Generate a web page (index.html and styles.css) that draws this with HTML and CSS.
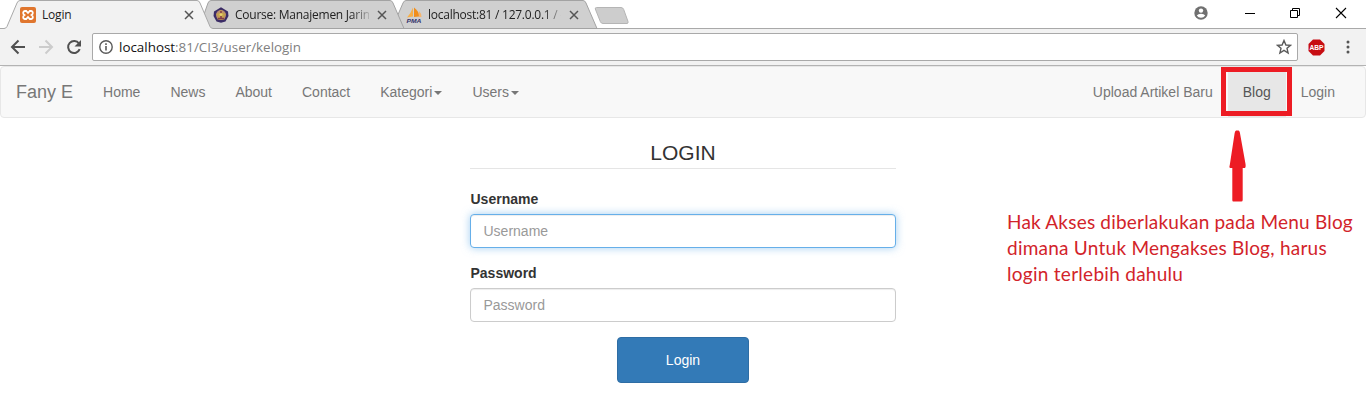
FILE: index.html
```html
<!DOCTYPE html>
<html lang="id">
<head>
<meta charset="utf-8">
<title>Login</title>
<link rel="stylesheet" href="styles.css">
</head>
<body>
<header class="browser">
  <div class="tabstrip">
    <svg class="tab-shapes" width="1366" height="29" viewBox="0 0 1366 29">
      <path d="M0 28.5H1366" stroke="#a9a9a9"/>
      <path d="M392 28.5 403 3Q404 .5 406 .5H583Q585 .5 586 3L597 28.5Z" fill="#d0d0d0" stroke="#a3a3a3"/>
      <path d="M199 28.5 208 3Q209 .5 211 .5H390Q392 .5 393 3L404 28.5Z" fill="#d0d0d0" stroke="#a3a3a3"/>
      <path d="M0 29V28.5H4Q6 28.5 7 26.5L17 3Q18 .5 20 .5H197Q199 .5 200 3L210 26.5Q211 28.5 213 28.5V29Z" fill="#f2f2f2"/>
      <path d="M0 28.5H4Q6 28.5 7 26.5L17 3Q18 .5 20 .5H197Q199 .5 200 3L210 26.5Q211 28.5 213 28.5" fill="none" stroke="#a9a9a9"/>
      <path d="M596.5 7.5H621Q623 7.5 623.7 9.5L628 21.5Q628.5 23.5 627 23.5H603Q601 23.5 600.3 21.5L595.3 9Q595 7.5 596.5 7.5Z" fill="#cdcdcd" stroke="#b5b5b5"/>
    </svg>
    <div class="tab tab-first">
      <svg width="16" height="16" viewBox="0 0 16 16"><rect width="16" height="16" rx="2" fill="#e0762e"/><path d="M5 4h1.2L8 6 9.8 4H11A1.8 1.8 0 0 1 12.8 6Q12.8 7.2 11.6 8 12.8 8.8 12.8 10A1.8 1.8 0 0 1 11 12H9.8L8 10 6.2 12H5A1.8 1.8 0 0 1 3.2 10Q3.2 8.8 4.4 8 3.2 7.2 3.2 6A1.8 1.8 0 0 1 5 4Z" fill="none" stroke="#fff" stroke-width="1.8"/></svg>
      <span class="tab-title title-login">Login</span>
      <svg class="close" width="10" height="10" viewBox="0 0 10 10"><path d="M1 1l8 8M9 1l-8 8" stroke="#555" stroke-width="1.5"/></svg>
    </div>
    <div class="tab tab-second">
      <svg width="16" height="16" viewBox="0 0 16 16"><path d="M8 .3 15 4.5 15.5 9 12.5 14.5 8 15.7 3.5 14.5 .5 9 1 4.5Z" fill="#3b2c66"/><circle cx="8" cy="8" r="5" fill="#b98b70"/><path d="M8 2.5 10 6l3 1-2 2.5 .5 3H4.5l.5-3L3 7l3-1Z" fill="#c4a34b"/><path d="M8 4v7M5 11.5h6" stroke="#833b4b" stroke-width="1.5"/><circle cx="8" cy="7.5" r="1.5" fill="#ead26b"/></svg>
      <span class="tab-title title-course">Course: Manajemen Jarin</span>
      <svg class="close" width="10" height="10" viewBox="0 0 10 10"><path d="M1 1l8 8M9 1l-8 8" stroke="#555" stroke-width="1.5"/></svg>
    </div>
    <div class="tab tab-third">
      <svg width="17" height="16" viewBox="0 0 17 16"><path d="M7 .5V9.5L1 10.5Q5 6 7 .5Z" fill="#f7b04a"/><path d="M8 .5Q13 4 13 9.5L8 10Z" fill="#f18e1c"/><path d="M13 4q3 3 2.5 6H13Z" fill="#f7b56c"/><text x="0.5" y="15.5" class="pma" textLength="15" lengthAdjust="spacingAndGlyphs">PMA</text></svg>
      <span class="tab-title title-local">localhost:81 / 127.0.0.1 / c</span>
      <svg class="close" width="10" height="10" viewBox="0 0 10 10"><path d="M1 1l8 8M9 1l-8 8" stroke="#555" stroke-width="1.5"/></svg>
    </div>
    <div class="window-controls">
      <svg width="160" height="28" viewBox="1194 0 160 28">
        <circle cx="1201" cy="13" r="6.7" fill="#707070"/><circle cx="1201" cy="10.6" r="2.2" fill="#fff"/><path d="M1196.8 15.5Q1198 13.8 1201 13.8T1205.2 15.5Q1203.7 17.7 1201 17.7T1196.8 15.5Z" fill="#fff"/>
        <path d="M1245 13.5h10" stroke="#000"/>
        <path d="M1290.5 10.5h7v7h-7ZM1292.5 10.5v-2h7v7h-2" fill="none" stroke="#000"/>
        <path d="M1336 8l10 10M1346 8l-10 10" stroke="#000" stroke-width="1.1"/>
      </svg>
    </div>
  </div>
  <div class="toolbar">
    <svg class="nav-icons" width="92" height="36" viewBox="0 29 92 36" fill="none">
      <path d="M25 47H12.5M18.5 40.5 12 47l6.5 6.5" stroke="#505050" stroke-width="2"/>
      <path d="M39 47h12.5M45.5 40.5 52 47l-6.5 6.5" stroke="#ccc" stroke-width="2"/>
      <path d="M79 43.5A6 6 0 1 0 79.7 49.2" stroke="#505050" stroke-width="2"/><path d="M81 40v6.5h-6.5Z" fill="#505050"/>
    </svg>
    <div class="omnibox">
      <svg width="14" height="14" viewBox="0 0 14 14"><circle cx="7" cy="7" r="6.2" fill="none" stroke="#5a5a5a" stroke-width="1.4"/><path d="M7 6v4.5M7 3.3v1.6" stroke="#5a5a5a" stroke-width="1.6"/></svg>
      <span class="url"><b>localhost</b>:81/CI3/user/kelogin</span>
      <svg class="star" width="16" height="16" viewBox="0 0 16 16"><path d="M8 1.5 9.9 6 14.5 6.3 11 9.3 12.1 14 8 11.4 3.9 14 5 9.3 1.5 6.3 6.1 6Z" fill="none" stroke="#5a5a5a" stroke-width="1.4"/></svg>
    </div>
    <svg class="abp" width="17" height="17" viewBox="0 0 17 17"><path d="M5 .5h7l4.5 4.5v7L12 16.5H5L.5 12V5Z" fill="#c70d12"/><text x="1.5" y="11.3" class="abp-text" textLength="14" lengthAdjust="spacingAndGlyphs">ABP</text></svg>
    <svg class="more" width="4" height="14" viewBox="0 0 4 14" fill="#555"><circle cx="2" cy="2" r="1.5"/><circle cx="2" cy="7" r="1.5"/><circle cx="2" cy="12" r="1.5"/></svg>
  </div>
</header>

<nav class="navbar">
  <a class="brand">Fany E</a>
  <a>Home</a>
  <a>News</a>
  <a>About</a>
  <a>Contact</a>
  <a>Kategori<i class="caret"></i></a>
  <a>Users<i class="caret"></i></a>
  <a class="push">Upload Artikel Baru</a>
  <a class="active">Blog<span class="highlight"></span></a>
  <a>Login</a>
</nav>

<main class="page">
  <form class="login">
    <h1>LOGIN</h1>
    <label for="username">Username</label>
    <input class="focused" id="username" type="text" placeholder="Username">
    <label for="password">Password</label>
    <input id="password" type="password" placeholder="Password">
    <button type="button">Login</button>
  </form>
  <aside class="note">
    <svg width="17" height="72" viewBox="0 0 18 72" preserveAspectRatio="none"><path d="M7.5 .5h2.5Q11 .5 11.5 2.5L17.5 34Q18 38 16.5 38H14.5V70Q14.5 71.5 13 71.5H4.5Q3.5 71.5 3.5 70V38H1Q0 37 1 34L6 3Q6.5 .5 7.5 .5Z" fill="#ed1c24"/></svg>
    <p><span class="line-a">Hak Akses diberlakukan pada Menu Blog</span><span class="line-b">dimana Untuk Mengakses Blog, harus</span><span class="line-c">login terlebih dahulu</span></p>
  </aside>
</main>
</body>
</html>
```

FILE: styles.css
```css
* { box-sizing: border-box; }
body {
  margin: 0;
  width: 1366px;
  height: 402px;
  overflow: hidden;
  background: #fff;
  color: #333;
  font: 14px/20px "Liberation Sans", Arial, sans-serif;
}
svg { display: block; flex: none; }

.tabstrip { position: relative; display: flex; height: 29px; }
.tab-shapes { position: absolute; top: 0; left: 0; }
.tab { position: relative; display: flex; align-items: center; width: 193px; height: 29px; padding-top: 1px; }
.tab-first { margin-left: 20px; }
.tab-title {
  width: 134px;
  margin-left: 6px;
  white-space: nowrap;
  color: #222;
  font: 12px/18px "Open Sans", "Noto Sans", sans-serif;
}
.title-login { letter-spacing: -0.2px; }
.title-course { letter-spacing: -0.25px; }
.title-course, .title-local {
  -webkit-mask-image: linear-gradient(90deg, #000 116px, transparent 138px);
  mask-image: linear-gradient(90deg, #000 116px, transparent 138px);
}
.title-local {
  width: 133px;
  margin-left: 5px;
  letter-spacing: -0.25px;
}
.close { margin-left: 8px; }
.pma { font: italic bold 5.5px "Liberation Sans", sans-serif; fill: #34336b; }
.window-controls { margin-left: auto; padding-right: 12px; position: relative; }

.toolbar {
  display: flex;
  align-items: center;
  height: 37px;
  background: #f2f2f2;
  border-bottom: 1px solid #b3b3b3;
}
.omnibox {
  display: flex;
  align-items: center;
  width: 1206px;
  height: 28px;
  padding: 0 5px 0 6px;
  background: #fff;
  border: 1px solid #a9a9a9;
  border-radius: 2px;
}
.url { margin-left: 6px; color: #808080; font: 13.4px/20px "Open Sans", "Noto Sans", sans-serif; }
.url b { font-weight: 400; color: #111; }
.star { margin-left: auto; }
.abp { margin-left: 10px; }
.abp-text { font: bold 7px "Liberation Sans", sans-serif; fill: #fff; }
.more { margin-left: 21px; }

.navbar {
  display: flex;
  height: 52px;
  padding: 0 15px;
  background: #f8f8f8;
  border: 1px solid #e7e7e7;
  border-radius: 4px;
}
.navbar a { padding: 15px; color: #777; white-space: nowrap; }
.navbar .brand { padding-left: 0; font-size: 18px; }
.navbar .push { margin-left: auto; }
.navbar .active { position: relative; background: #e7e7e7; color: #555; }
.highlight {
  position: absolute;
  top: 0;
  left: -7px;
  width: 71px;
  height: 49px;
  border: 5px solid #ed1c24;
}
.caret {
  display: inline-block;
  margin-left: 2px;
  vertical-align: middle;
  border: 4px solid transparent;
  border-top-color: #777;
  border-bottom: 0;
}

.page { display: flex; align-items: flex-start; padding-left: 470px; }
.login { width: 426px; padding-top: 23px; }
.login h1 {
  margin: 0 0 20px;
  padding-bottom: 3px;
  border-bottom: 1px solid #e5e5e5;
  font-size: 21px;
  font-weight: 400;
  line-height: 24px;
  text-align: center;
}
.login label { display: block; margin-bottom: 5px; padding-left: 0.5px; font-weight: 700; }
.login input {
  display: block;
  width: 100%;
  height: 34px;
  margin-bottom: 15px;
  padding: 6px 12.5px;
  border: 1px solid #ccc;
  border-radius: 4px;
  box-shadow: inset 0 1px 1px rgba(0, 0, 0, .075);
  font: inherit;
}
.login input::placeholder { color: #999; opacity: 1; }
.login .focused { border-color: #66afe9; box-shadow: inset 0 1px 1px rgba(0, 0, 0, .075), 0 0 8px rgba(102, 175, 233, .6); }
.login button {
  display: block;
  width: 132px;
  height: 46px;
  margin: 0 auto;
  padding: 0;
  border: 1px solid #2e6da4;
  border-radius: 4px;
  background: #337ab7;
  color: #fff;
  font: inherit;
}

.note { margin-left: 111px; padding-top: 12px; }
.note svg { margin-left: 222px; }
.note p { margin: 7px 0 0; color: #d2232a; font: 19px/26px Lato, sans-serif; white-space: nowrap; }
.note span { display: block; }
.line-a { letter-spacing: 0.2px; }
.line-b { letter-spacing: 0.24px; }
.line-c { letter-spacing: 0.28px; }
```
